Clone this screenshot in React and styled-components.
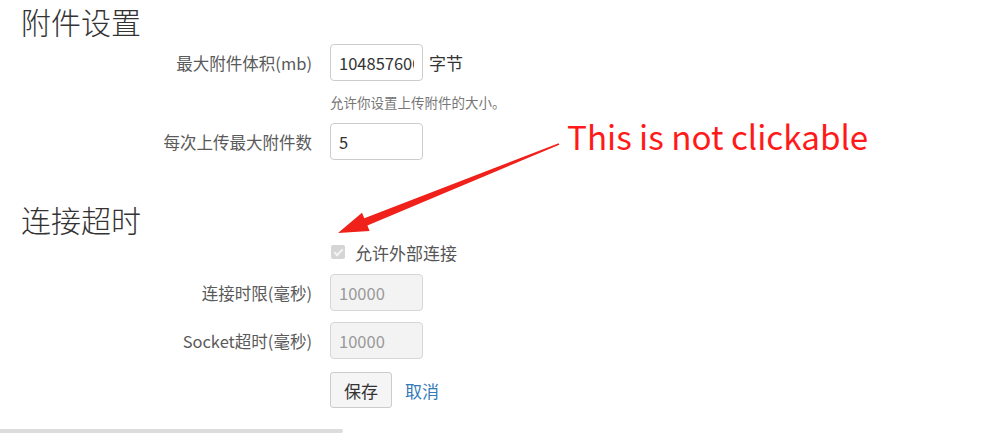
import React from "react";
import styled, { createGlobalStyle } from "styled-components";

const GlobalStyle = createGlobalStyle`
  html, body {
    margin: 0;
    padding: 0;
    background: #fff;
    overflow: hidden;
  }
  body {
    font-family: "Noto Sans CJK SC", "Noto Sans", sans-serif;
    color: #333;
  }
`;

function App() {
  return (
    <Page>
      <GlobalStyle />
      <Heading>附件设置</Heading>
      <FormRow>
        <Label>最大附件体积(mb)</Label>
        <Control>
          <Input defaultValue="104857600" />
          <Unit>字节</Unit>
        </Control>
      </FormRow>
      <HelpRow>
        <HelpText>允许你设置上传附件的大小。</HelpText>
      </HelpRow>
      <FormRow $top={12}>
        <Label>每次上传最大附件数</Label>
        <Control>
          <Input defaultValue="5" />
        </Control>
      </FormRow>

      <Heading $top={38}>连接超时</Heading>
      <CheckRow>
        <CheckLabel>
          <Checkbox type="checkbox" checked disabled readOnly />
          允许外部连接
        </CheckLabel>
      </CheckRow>
      <FormRow $top={12}>
        <Label>连接时限(毫秒)</Label>
        <Control>
          <Input defaultValue="10000" disabled />
        </Control>
      </FormRow>
      <FormRow $top={11}>
        <Label>Socket超时(毫秒)</Label>
        <Control>
          <Input defaultValue="10000" disabled />
        </Control>
      </FormRow>
      <FormRow $top={13}>
        <span />
        <Control>
          <Button type="button">保存</Button>
          <CancelLink href="#">取消</CancelLink>
        </Control>
      </FormRow>
      <ScrollThumb />

      <Note>This is not clickable</Note>
      <Arrow width="999" height="433" viewBox="0 0 999 433">
        <polygon
          points="559.3,144.7 367.4,225.4 369.6,231.0 338,233 362,212.8 364.3,218.2 558.7,143.3"
          fill="#f0201a"
        />
      </Arrow>
    </Page>
  );
}

const Page = styled.div`
  position: relative;
  width: 999px;
  height: 433px;
  display: flex;
  flex-direction: column;
`;

const Heading = styled.h3`
  margin: ${(p) => p.$top || 0}px 0 2px 0;
  padding-left: 21px;
  height: 42px;
  line-height: 42px;
  font-size: 30px;
  font-weight: 300;
  color: #333;
`;

const FormRow = styled.div`
  display: grid;
  grid-template-columns: 312px auto;
  column-gap: 18px;
  align-items: center;
  margin-top: ${(p) => p.$top || 0}px;
`;

const Label = styled.label`
  text-align: right;
  font-size: 16.5px;
  color: #5a5a5a;
`;

const Control = styled.div`
  display: flex;
  align-items: center;
  gap: 6px;
`;

const Input = styled.input`
  box-sizing: border-box;
  width: 93px;
  height: 37px;
  padding: 0 8px;
  border: 1px solid #ccc;
  border-radius: 4px;
  font-family: inherit;
  font-size: 16.5px;
  color: #333;
  background: #fff;
  outline: none;

  &:disabled {
    background: #f3f3f3;
    color: #999;
    border-color: #d6d6d6;
  }
`;

const Unit = styled.span`
  font-size: 17px;
  color: #333;
`;

const HelpRow = styled.div`
  margin-top: 10px;
  padding-left: 330px;
  height: 20px;
  line-height: 20px;
`;

const HelpText = styled.span`
  font-size: 13.5px;
  color: #777;
`;

const CheckRow = styled.div`
  padding-left: 331px;
  height: 20px;
  display: flex;
  align-items: center;
  margin-top: 0;
`;

const CheckLabel = styled.label`
  display: flex;
  align-items: center;
  gap: 10px;
  font-size: 17px;
  color: #555;
`;

const Checkbox = styled.input`
  appearance: none;
  margin: 0;
  width: 14px;
  height: 14px;
  border-radius: 2px;
  background: #d5d5d5;
  position: relative;

  &::after {
    content: "";
    position: absolute;
    left: 4.5px;
    top: 1.5px;
    width: 3px;
    height: 7px;
    border: solid #f4f4f4;
    border-width: 0 2px 2px 0;
    transform: rotate(45deg);
  }
`;

const Button = styled.button`
  box-sizing: border-box;
  width: 62px;
  height: 36px;
  border: 1px solid #ccc;
  border-radius: 3px;
  background: #f5f5f5;
  font-family: inherit;
  font-size: 17px;
  color: #333;
  padding: 0;
`;

const CancelLink = styled.a`
  margin-left: 7px;
  font-size: 17px;
  color: #337ab7;
  text-decoration: none;
`;

const ScrollThumb = styled.div`
  margin-top: 21px;
  width: 343px;
  height: 4px;
  background: #dcdcdc;
  border-radius: 0 3px 3px 0;
`;

const Note = styled.div`
  position: absolute;
  left: 567px;
  top: 114px;
  font-family: "Noto Sans CJK SC", sans-serif;
  font-size: 33.2px;
  line-height: 44px;
  color: #ff1a1a;
  white-space: nowrap;
`;

const Arrow = styled.svg`
  position: absolute;
  left: 0;
  top: 0;
  pointer-events: none;
`;

export default App;
